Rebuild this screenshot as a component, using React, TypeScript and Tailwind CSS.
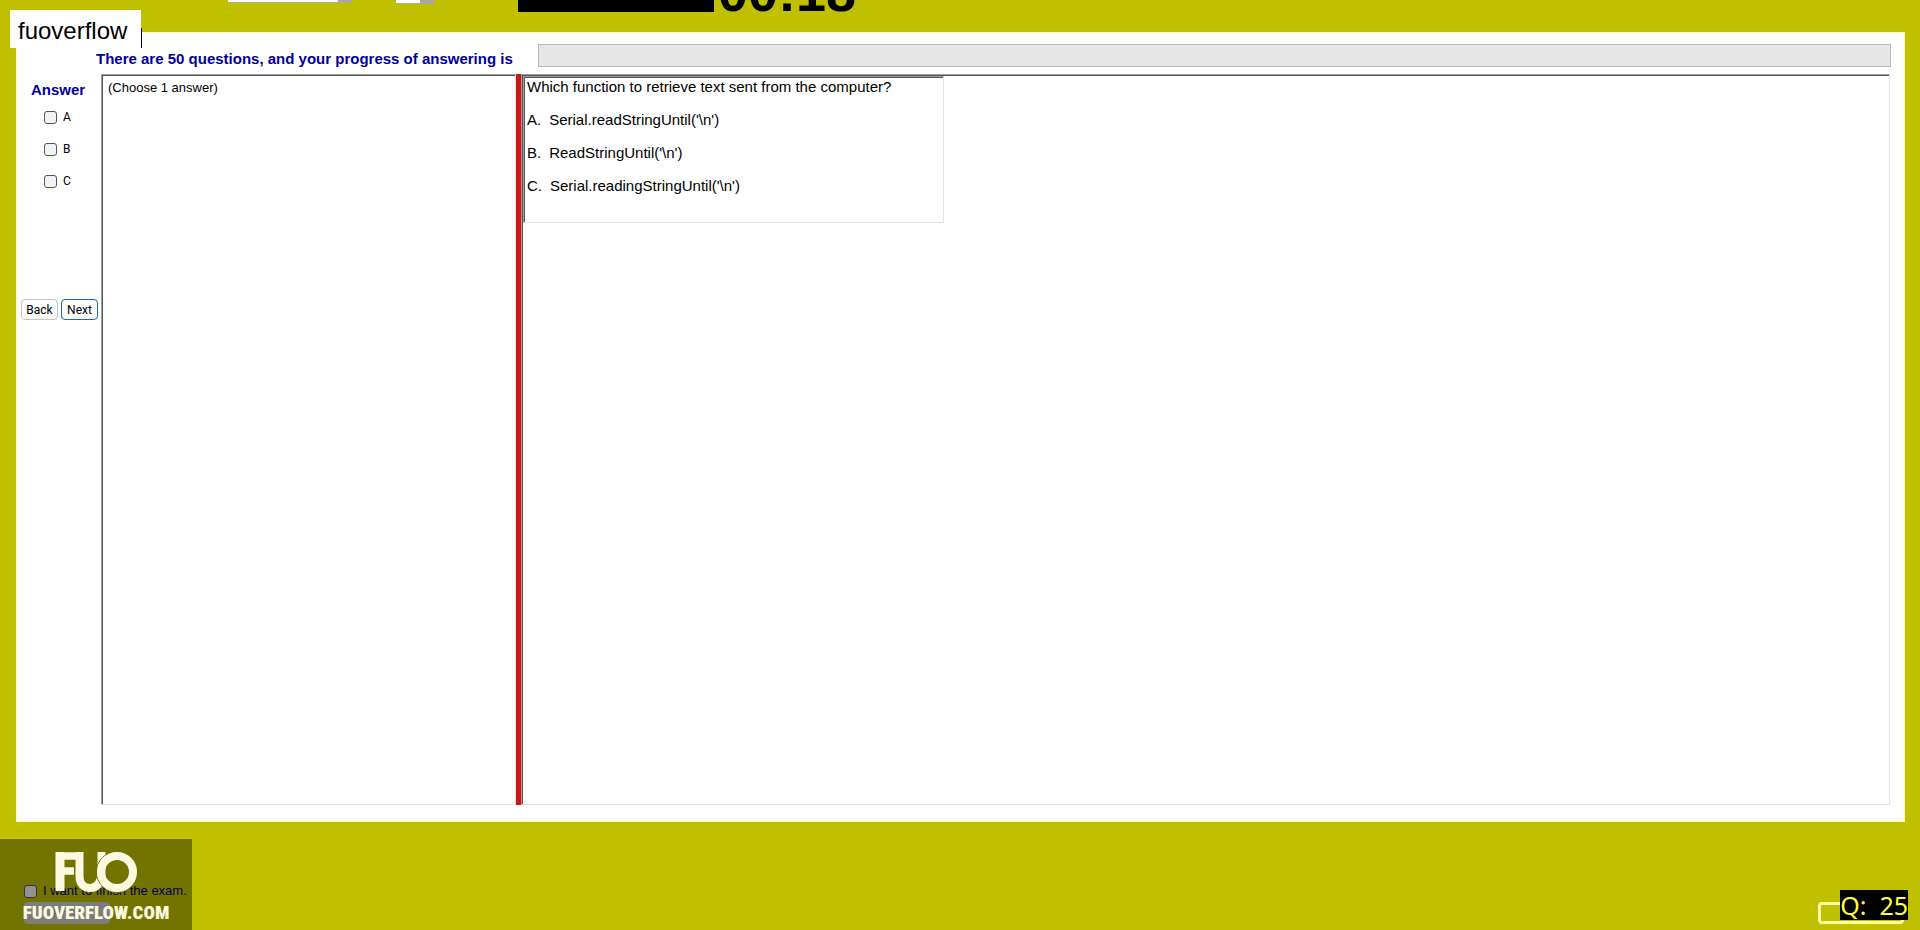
const options = ["A", "B", "C"];

const answers = [
  { key: "A.", text: "Serial.readStringUntil('\\n')" },
  { key: "B.", text: "ReadStringUntil('\\n')" },
  { key: "C.", text: "Serial.readingStringUntil('\\n')" },
];

const checkbox =
  "size-[13px] shrink-0 appearance-none rounded-[3px] border border-[#555] bg-[#f3f3f3] checked:bg-[#0067c0]";

const sunken =
  "border border-t-[#a0a0a0] border-r-[#e3e3e3] border-b-[#e3e3e3] border-l-[#a0a0a0] shadow-[inset_1px_1px_0_#555]";

const TopBar = () => (
  <header className="flex h-8 items-start overflow-hidden pl-[228px]">
    <select
      aria-label="Font"
      className="h-[3px] w-[124px] appearance-none border-r-[14px] border-b border-r-[#a8a8a8] border-b-[#b0b080] bg-white"
    />
    <select
      aria-label="Size"
      className="ml-11 h-1 w-[38px] appearance-none border-r-[14px] border-b border-r-[#a8a8a8] border-b-[#b0b080] bg-white"
    />
    <div className="ml-[84px] h-3 w-[196px] bg-black" />
    <div className="-mt-[36px] ml-1 text-[54px] leading-[56px] font-bold">
      00:18
    </div>
  </header>
);

const AnswerColumn = () => (
  <aside className="flex w-[84px] shrink-0 flex-col">
    <h2 className="mt-[6px] pl-[14px] text-[15px] leading-5 font-bold text-[#0000a0]">
      Answer
    </h2>
    <div className="mt-[7px] flex flex-col gap-3 pl-[27px]">
      {options.map((option) => (
        <label
          key={option}
          className="flex h-5 items-center gap-[6px] font-['Roboto'] text-xs"
        >
          <input type="checkbox" className={checkbox} />
          {option}
        </label>
      ))}
    </div>
    <div className="mt-[108px] flex gap-[3px] pl-1 font-['Roboto'] text-xs">
      <button className="h-[21px] w-[37px] rounded-[4px] border border-[#c4c4c4] bg-[#fdfdfd]">
        Back
      </button>
      <button className="h-[21px] w-[37px] rounded-[4px] border border-[#1a6f9a] bg-[#fdfdfd]">
        Next
      </button>
    </div>
  </aside>
);

const Question = () => (
  <div
    className={`min-h-[147px] w-[421px] pt-px pl-[3px] text-[15px] leading-[17px] ${sunken}`}
  >
    <p>Which function to retrieve text sent from the computer?</p>
    <ul className="mt-4 flex flex-col gap-4">
      {answers.map((answer) => (
        <li key={answer.key} className="flex gap-2">
          <span>{answer.key}</span>
          <span>{answer.text}</span>
        </li>
      ))}
    </ul>
  </div>
);

const Watermark = () => (
  <div className="absolute inset-0 flex flex-col items-center bg-black/40 pt-3">
    <svg
      width="82"
      height="42"
      viewBox="2 0 82 42"
      fill="none"
      stroke="#fbfae0"
      className="shrink-0"
      aria-hidden="true"
    >
      <path d="M7 40V1" strokeWidth="9" />
      <path d="M3 5H24M7 20H21" strokeWidth="7.500" />
      <path
        d="M26.500 1V25C26.500 33 31 37 37 37C44 37 48 32 48.500 22V1"
        strokeWidth="8"
      />
      <circle cx="64" cy="21" r="20.500" stroke="#727200" strokeWidth="1" />
      <circle cx="64" cy="21" r="16" strokeWidth="8" />
    </svg>
    <div className="mt-2 font-['Roboto_Condensed','Liberation_Sans_Narrow','Roboto',sans-serif] text-[19px] leading-6 font-black text-[#fbfae0]">
      FUOVERFLOW.COM
    </div>
  </div>
);

export default function App() {
  return (
    <div className="relative flex min-h-screen flex-col bg-[#c0c000] font-['Liberation_Sans',sans-serif] text-black">
      <TopBar />
      <main className="mr-[15px] ml-4 flex h-[790px] flex-col border border-[#ffffb0] bg-white pr-[14px] pb-4">
        <div className="flex items-start pt-[11px]">
          <label
            htmlFor="progress"
            className="mt-[5px] ml-[79px] w-[442px] text-[15px] leading-5 font-bold whitespace-nowrap text-[#0000a0]"
          >
            There are 50 questions, and your progress of answering is
          </label>
          <div
            id="progress"
            role="progressbar"
            aria-valuenow={0}
            className="-mr-px h-[23px] flex-1 border border-[#b8b8b8] bg-[#e6e6e6]"
          />
        </div>
        <div className="mt-[5px] flex flex-1">
          <AnswerColumn />
          <section
            className={`w-[415px] shrink-0 px-[6px] pt-[3px] text-[13px] leading-5 ${sunken}`}
          >
            (Choose 1 answer)
          </section>
          <div className="w-[5px] shrink-0 bg-[#d01414]" />
          <section className={`flex-1 pt-px pl-px ${sunken}`}>
            <Question />
          </section>
        </div>
      </main>
      <div className="absolute top-[10px] left-[10px] flex items-start">
        <div className="w-[131px] bg-white px-2 pt-[6px] pb-[2px] text-2xl leading-[30px]">
          fuoverflow
        </div>
        <div className="mt-[18px] h-5 w-px bg-black" />
      </div>
      <footer className="mt-[17px] flex flex-1 items-end justify-between">
        <div className="relative h-[91px] w-48">
          <div className="flex h-full flex-col pt-[42px] pl-6">
            <label className="flex items-center gap-[6px] text-[13px] leading-5 whitespace-nowrap text-[#000080]">
              <input type="checkbox" className={checkbox} />I want to finish the
              exam.
            </label>
            <button className="mt-px h-[22px] w-[86px] rounded-[4px] bg-[#d0d0c8] text-[11px] text-[#999]">
              Finish
            </button>
          </div>
          <Watermark />
        </div>
        <div className="relative mr-4 mb-[6px] h-[22px] w-[86px] rounded-[4px] border-3 border-[#ffffa0]">
          <div className="absolute -right-[7px] bottom-px bg-black font-['Noto_Sans'] text-[25px] leading-[30px] whitespace-pre text-[#ffff40]">
            {"Q:  25"}
          </div>
        </div>
      </footer>
    </div>
  );
}
